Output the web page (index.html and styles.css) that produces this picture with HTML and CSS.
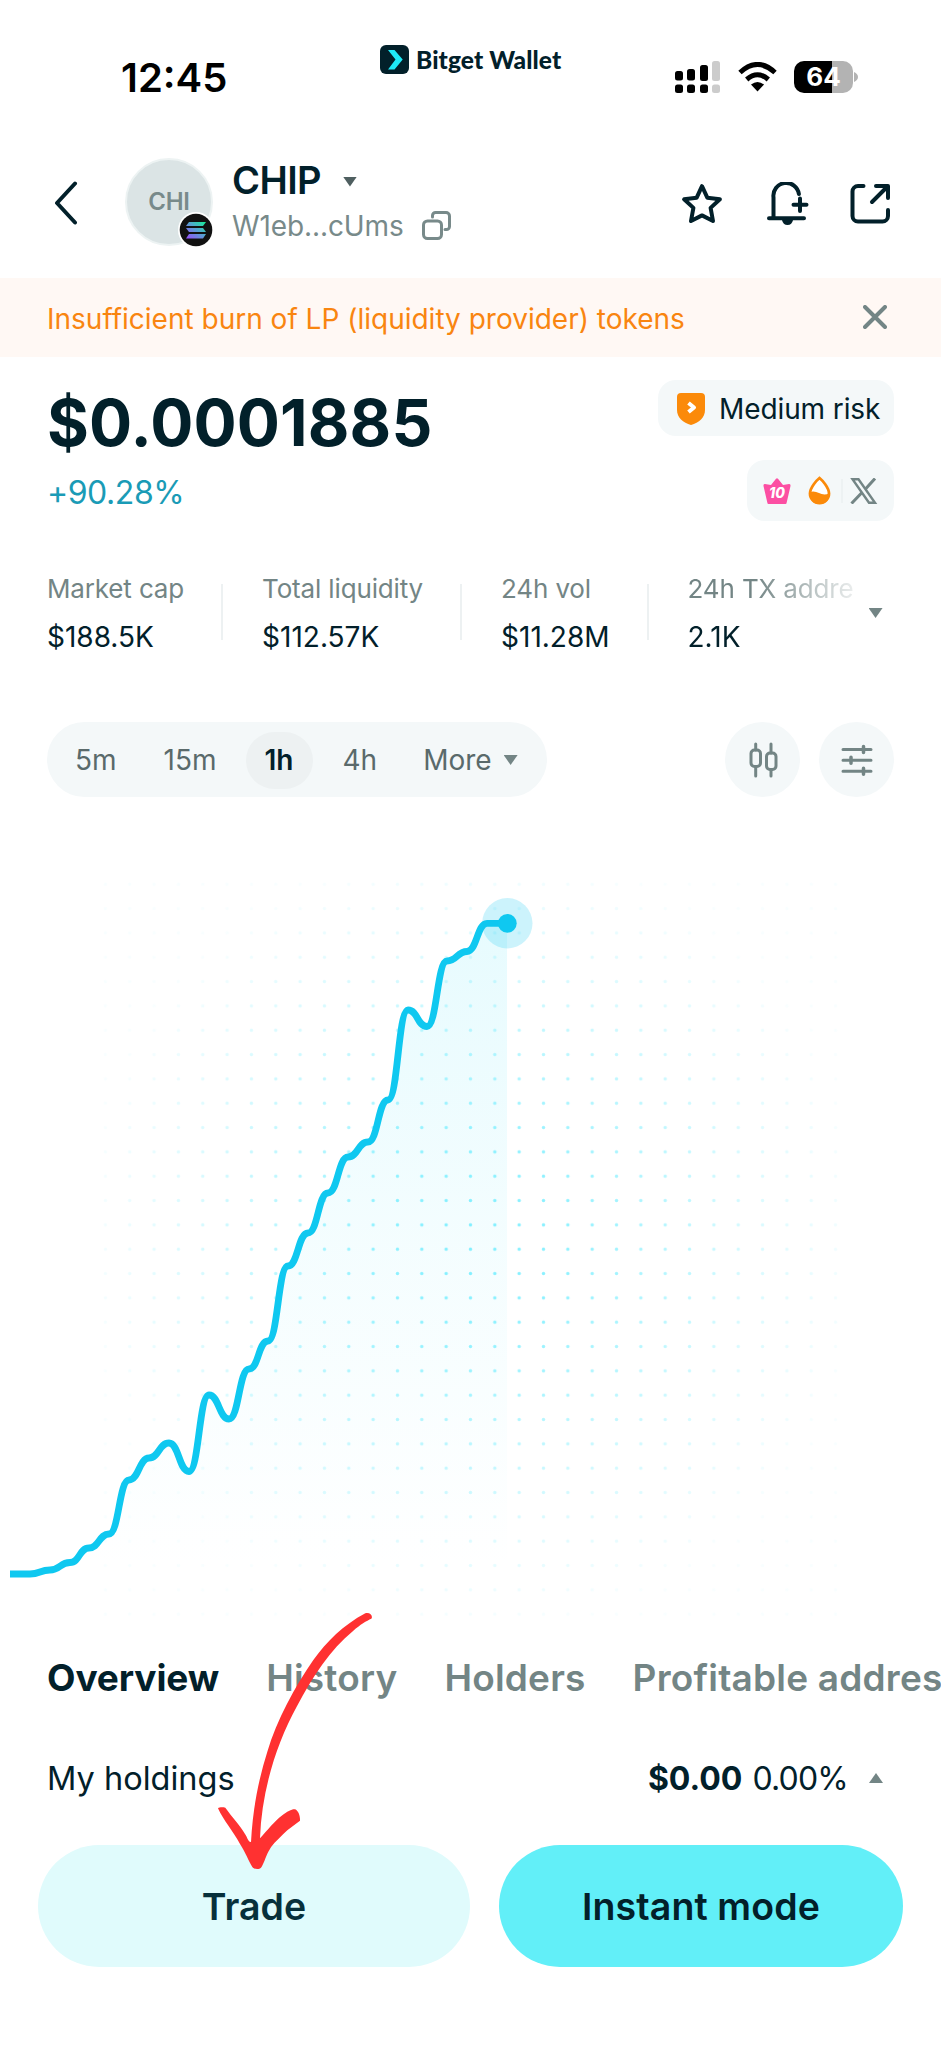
FILE: index.html
```html
<!DOCTYPE html>
<html lang="en">
<head>
	<meta charset="UTF-8">
	<title>CHIP - Bitget Wallet</title>
	<link rel="stylesheet" href="styles.css">
</head>
<body>
	<div class="phone">
		<div class="status">
			<span class="time">12:45</span>
			<div class="brand">
				<svg width="29" height="29" viewBox="0 0 29 29"><rect width="29" height="29" rx="6" fill="#02202a"/><path d="M8 5h6.500l8.200 9.500L14.500 24.500H8l7.500-10z" fill="#1ee9f7"/></svg>
				<span>Bitget Wallet</span>
			</div>
			<div class="signals">
				<svg width="45" height="32" viewBox="0 0 45 32">
					<rect x="0" y="10" width="8" height="9.500" rx="2.500"/><rect x="12" y="8" width="8" height="11.500" rx="2.500"/><rect x="25" y="4" width="8" height="16" rx="2.500"/>
					<rect x="0" y="23.500" width="8" height="8.500" rx="2.500"/><rect x="12" y="23.500" width="8" height="8.500" rx="2.500"/><rect x="25" y="23.500" width="8" height="8.500" rx="2.500"/>
					<g fill="#ccc"><rect x="37" y="0" width="8" height="20" rx="2.500"/><rect x="37" y="23.500" width="8" height="8.500" rx="2.500"/></g>
				</svg>
				<svg class="wifi" width="39" height="30" viewBox="0 0 39 30">
					<g fill="none" stroke="#000" stroke-width="5"><path d="M2 10.500Q19.500-5.500 37 10.500"/><path d="M8.700 17.500Q19.500 8 30.300 17.500"/></g>
					<path d="M13 22.500q6.500-5 13 0L19.500 29.500z"/>
				</svg>
				<div class="battery">64</div>
				<svg width="4" height="10" viewBox="0 0 4 10"><path d="M0 0q4 2 4 5t-4 5z" fill="#b3b3b3"/></svg>
			</div>
		</div>

		<div class="header">
			<svg class="back" width="24" height="44" viewBox="0 0 24 44"><path d="M21 2.500L3 22l18 19.500" fill="none" stroke="#02202a" stroke-width="4" stroke-linecap="round" stroke-linejoin="round"/></svg>
			<div class="avatar">CHI
				<svg class="chain" width="36" height="36" viewBox="0 0 36 36">
					<defs><linearGradient id="sol" x1="0" y1="1" x2="1" y2="0"><stop offset="0" stop-color="#9a4bff"/><stop offset=".5" stop-color="#5b9bd5"/><stop offset="1" stop-color="#14f195"/></linearGradient></defs>
					<circle cx="18" cy="18" r="18" fill="#fff"/><circle cx="18" cy="18" r="16.300" fill="#111"/>
					<path d="M11 10h17l-3 4H8zM8 16h17l3 4H11zM11 22h17l-3 4.500H8z" fill="url(#sol)"/>
				</svg>
			</div>
			<div class="token">
				<div class="name">CHIP <i class="caret dark"></i></div>
				<div class="address">W1eb...cUms
					<svg width="29" height="29" viewBox="0 0 29 29" fill="none" stroke="#788a8a" stroke-width="3"><rect x="1.500" y="10" width="18" height="17.500" rx="4"/><path d="M10.500 6V4.500a3 3 0 0 1 3-3h10.500a3.500 3.500 0 0 1 3.500 3.500v10.500a3 3 0 0 1-3 3h-1.500" stroke-linecap="round"/></svg>
				</div>
			</div>
			<div class="actions">
				<svg class="star" width="42" height="42" viewBox="0 0 42 42"><path d="M21 3.200L26.300 14.700L38.900 16.300L29.600 24.900L32 38L21 32.400L10 38L12.400 24.900L3.100 16.300L15.700 14.700Z"/></svg>
				<svg class="bell" width="43" height="44" viewBox="0 0 43 44"><path d="M7.500 36V15.500a12.800 12.800 0 0 1 25.400-3.500M3 36.300h35M34 16.500v12.500M27.500 22.700h13"/><path d="M16 38h11q-1 5-5.500 5T16 38z" fill="#02202a" stroke="none"/></svg>
				<svg class="share" width="41" height="41" viewBox="0 0 41 41"><path d="M13.500 3H8a5.500 5.500 0 0 0-5.500 5.500v24.500a5.500 5.500 0 0 0 5.500 5.500h24.500a5.500 5.500 0 0 0 5.500-5.500v-6M26 3h12v12M37.500 3.500L22 19"/></svg>
			</div>
		</div>

		<div class="warning">
			<span>Insufficient burn of LP (liquidity provider) tokens</span>
			<svg width="24" height="24" viewBox="0 0 24 24"><path d="M2 2l20 20M22 2L2 22" stroke="#738585" stroke-width="4" stroke-linecap="round"/></svg>
		</div>

		<div class="summary">
			<div>
				<div class="price">$0.0001885</div>
				<div class="change">+90.28%</div>
			</div>
			<div class="badges">
				<div class="risk">
					<svg width="28" height="32" viewBox="0 0 28 32"><path d="M4 0h20a4 4 0 0 1 4 4v13c0 8-6 12.500-14 15C6 29.500 0 25 0 17V4a4 4 0 0 1 4-4z" fill="#fb8a0a"/><path d="M11.500 10l5.500 4.500-5.500 4.500" fill="none" stroke="#fff" stroke-width="4" stroke-linejoin="round"/></svg>
					<span>Medium risk</span>
				</div>
				<div class="links">
					<svg width="28" height="26" viewBox="0 0 28 26"><path d="M5.500 26q-1 0-1.200-1.500L.5 8q-.3-2 1.500-2l6 1L13 .8q1-1 2 0L20 7l6-1q1.800 0 1.500 2l-3.800 16.500q-.2 1.500-1.200 1.500z" fill="#fc4fa3"/><text x="14" y="20" text-anchor="middle" class="ten">10</text></svg>
					<svg class="drop" width="23" height="29" viewBox="0 0 23 29"><path d="M11.500 2C14 4 21 11.500 21 17.500a9.500 9.500 0 0 1-19 0C2 11.500 9 4 11.500 2z" fill="#fff" stroke="#fb8a0a" stroke-width="2.800"/><path d="M1.500 16q5-1.500 9.500 1t10.500.5q0 10.500-10 10.500T1.500 16z" fill="#fb8a0a"/></svg>
					<span class="bar"></span>
					<svg width="28" height="26" viewBox="0 0 28 26" fill="none" stroke="#738585"><path d="M2.500 1.200h6L25 24.800h-6z" stroke-width="2.400"/><path d="M25 .5L15.500 11M12 14.500L1.500 25.500" stroke-width="3"/></svg>
				</div>
			</div>
		</div>

		<div class="stats">
			<div class="stat"><label>Market cap</label><b>$188.5K</b></div>
			<div class="stat"><label>Total liquidity</label><b>$112.57K</b></div>
			<div class="stat"><label>24h vol</label><b>$11.28M</b></div>
			<div class="stat last"><label>24h TX addre</label><b>2.1K</b></div>
			<i class="caret"></i>
		</div>

		<div class="toolbar">
			<div class="frames">
				<span>5m</span><span>15m</span><span class="on">1h</span><span>4h</span><span class="more">More <i class="caret"></i></span>
			</div>
			<div class="round">
				<svg width="30" height="36" viewBox="0 0 30 36"><path d="M7.700 2v6M7.700 26v8M23 2v9M23 29v5"/><rect x="3" y="8" width="9.500" height="16.500" rx="3.500"/><rect x="18.500" y="11" width="9.500" height="16.500" rx="3.500"/></svg>
			</div>
			<div class="round">
				<svg width="32" height="34" viewBox="0 0 32 34"><path d="M2 6.500h28M2 17.300h28M2 28.300h28" stroke-width="3"/><path d="M22.500 3.500v6M10 14.300v6M22.500 25.300v6" stroke-width="3.500"/></svg>
			</div>
		</div>

		<svg class="chart" width="941" height="780" viewBox="0 840 941 780">
			<defs>
				<linearGradient id="area" x1="0" y1="923" x2="0" y2="1574" gradientUnits="userSpaceOnUse">
					<stop offset="0" stop-color="#0fd8f5" stop-opacity=".1"/>
					<stop offset=".5" stop-color="#0fd8f5" stop-opacity=".045"/>
					<stop offset="1" stop-color="#0fd8f5" stop-opacity="0"/>
				</linearGradient>
				<pattern id="dots" x="93.200" y="872.100" width="24.340" height="24.330" patternUnits="userSpaceOnUse">
					<circle cx="12.200" cy="12.200" r="1.700" fill="#7defff"/>
				</pattern>
				<radialGradient id="fade" cx="475" cy="1240" r="390" gradientUnits="userSpaceOnUse">
					<stop offset="0" stop-color="#fff"/>
					<stop offset=".25" stop-color="#fff" stop-opacity=".85"/>
					<stop offset=".7" stop-color="#fff" stop-opacity=".32"/>
					<stop offset="1" stop-color="#fff" stop-opacity=".05"/>
				</radialGradient>
				<mask id="glow"><rect x="95" y="872" width="750" height="748" fill="url(#fade)"/></mask>
			</defs>
			<path d="M10 1574C20 1574 20 1574 30 1574S40 1570 50 1570S60 1562.500 70 1562.500S79 1548 89 1548S99 1534 109 1534S119 1480 129 1480S139 1458 149 1458S159 1443 169 1443S179 1471.500 189 1471.500S199 1395 209 1395S219 1419 229 1419S239 1369 249 1369S258 1341 268 1341S278 1266 288 1266S298 1233 308 1233S318 1193 328 1193S338 1157 348 1157S358 1142 368 1142S378 1100 388 1100S398 1010 408 1010S417 1026.500 427 1026.500S437 961 447 961S457 951.500 467 951.500S477 923.300 487 923.300H507V1574z" fill="url(#area)"/>
			<rect x="95" y="872" width="750" height="748" fill="url(#dots)" mask="url(#glow)"/>
			<path d="M10 1574C20 1574 20 1574 30 1574S40 1570 50 1570S60 1562.500 70 1562.500S79 1548 89 1548S99 1534 109 1534S119 1480 129 1480S139 1458 149 1458S159 1443 169 1443S179 1471.500 189 1471.500S199 1395 209 1395S219 1419 229 1419S239 1369 249 1369S258 1341 268 1341S278 1266 288 1266S298 1233 308 1233S318 1193 328 1193S338 1157 348 1157S358 1142 368 1142S378 1100 388 1100S398 1010 408 1010S417 1026.500 427 1026.500S437 961 447 961S457 951.500 467 951.500S477 923.300 487 923.300H507" fill="none" stroke="#0fc8f0" stroke-width="6.800" stroke-linejoin="round"/>
			<circle cx="507.300" cy="923.300" r="25.200" fill="#0fc8f0" fill-opacity=".21"/>
			<circle cx="507.300" cy="923.300" r="9.400" fill="#0fc8f0"/>
		</svg>

		<div class="tabs">
			<span class="on">Overview</span><span>History</span><span>Holders</span><span>Profitable address</span>
		</div>

		<div class="holdings">
			<span class="mine">My holdings</span>
			<b>$0.00</b><span class="pct">0.00%</span>
			<i class="caret up"></i>
		</div>

		<div class="buttons">
			<button class="trade">Trade</button>
			<button class="instant">Instant mode</button>
		</div>

		<svg class="arrow" width="300" height="310" viewBox="0 0 900 930"><path d="M556 70C570 66 580 78 574 86C560 92 540 104 520 122C450 180 400 255 350 350C290 460 245 600 240 745C262 720 285 692 305 677C325 662 340 655 348 659C356 664 361 680 360 692C345 704 325 716 310 732C290 752 275 765 265 785C257 800 250 825 243 833C238 839 222 838 217 831C207 815 195 785 180 762C160 725 130 690 114 655C118 651 130 652 136 653C155 680 180 705 195 732C202 742 205 757 213 756C218 660 235 570 262 485C290 390 345 290 400 210C440 155 490 105 556 70Z" fill="#ff3131"/></svg>
	</div>
</body>
</html>
```
FILE: styles.css
```css
* {
	box-sizing: border-box;
}

body {
	margin: 0;
	background-color: #fff;
	color: #02202a;
	font-family: Inter, "Liberation Sans", sans-serif;
}

svg {
	display: block;
	flex: none;
}

.phone {
	position: relative;
	width: 941px;
	height: 2048px;
	overflow: hidden;
	white-space: nowrap;
}

/* status bar */
.status {
	display: flex;
	height: 127px;
	padding-left: 121px;
}

.time {
	width: 259px;
	margin-top: 56px;
	color: #000;
	font-size: 40px;
	font-weight: 600;
	line-height: 44px;
}

.brand {
	display: flex;
	width: 295px;
	height: 29px;
	margin-top: 45px;
	gap: 7px;
	font-family: Lato, sans-serif;
	font-size: 24.5px;
	font-weight: 900;
	letter-spacing: .1px;
	line-height: 29px;
}

.signals {
	display: flex;
	align-items: center;
	height: 32px;
	margin-top: 61px;
}

.wifi {
	margin: 0 17px 0 18px;
}

.battery {
	width: 59px;
	height: 32px;
	margin-right: 1px;
	border-radius: 10px;
	background: linear-gradient(to right, #000 38px, #b3b3b3 38px);
	color: #fff;
	font-size: 26px;
	font-weight: 700;
	line-height: 32px;
	text-align: center;
}

/* header */
.header {
	display: flex;
	align-items: center;
	height: 151px;
	padding: 0 50px 0 54px;
}

.avatar {
	position: relative;
	width: 88px;
	height: 88px;
	margin: 0 0 1px 47px;
	border: 2px solid #edf3f3;
	border-radius: 50%;
	background-color: #dbe4e5;
	color: #788a8a;
	font-size: 24px;
	font-weight: 600;
	letter-spacing: -.3px;
	line-height: 83px;
	text-align: center;
}

.chain {
	position: absolute;
	right: -3px;
	bottom: -4px;
}

.token {
	margin: 2px 0 0 19px;
}

.name {
	display: flex;
	align-items: center;
	height: 45px;
	font-size: 38px;
	font-weight: 600;
	letter-spacing: -.6px;
}

.name .caret {
	margin: 4px 0 0 22px;
}

.address {
	display: flex;
	align-items: center;
	height: 48px;
	color: #788a8a;
	font-size: 28px;
	letter-spacing: -.1px;
}

.address svg {
	margin: 0 0 1px 18px;
}

.actions {
	display: flex;
	align-items: center;
	margin-left: auto;
}

.actions svg {
	fill: none;
	stroke: #02202a;
	stroke-width: 4;
	stroke-linecap: round;
	stroke-linejoin: round;
}

.star {
	margin: 3px 43px 0 0;
}

.bell {
	margin: 2px 41px 0 0;
}

.share {
	margin-top: 2px;
}

.caret {
	width: 14px;
	height: 10px;
	background-color: #738585;
	clip-path: polygon(0 0, 100% 0, 50% 100%);
}

.caret.dark {
	background-color: #4f5f60;
}

.caret.up {
	clip-path: polygon(0 100%, 100% 100%, 50% 0);
}

.warning {
	display: flex;
	align-items: center;
	justify-content: space-between;
	height: 79px;
	padding: 2px 54px 0 47px;
	background-color: #fff8f4;
	color: #f98510;
	font-size: 28px;
}

.warning svg {
	margin: 0 0 3px;
}

/* price */
.summary {
	display: flex;
	justify-content: space-between;
	height: 205px;
	padding: 23px 47px 0 47px;
}

.price {
	margin-top: 4px;
	font-size: 64px;
	font-weight: 700;
	letter-spacing: .15px;
	line-height: 78px;
}

.change {
	margin-top: 11px;
	color: #1a9bb6;
	font-size: 32px;
	letter-spacing: -.45px;
	line-height: 40px;
}

.badges {
	display: flex;
	flex-direction: column;
	align-items: flex-end;
	gap: 24px;
}

.risk, .links {
	display: flex;
	align-items: center;
	border-radius: 18px;
	background-color: #f4f8f9;
}

.risk {
	width: 236px;
	height: 56px;
	padding: 2px 0 0 19px;
	gap: 14px;
	font-size: 28px;
	letter-spacing: -.1px;
}

.links {
	width: 147px;
	height: 61px;
	padding-left: 16px;
}

.drop {
	margin: 0 10px 0 17px;
}

.bar {
	width: 2px;
	height: 24px;
	margin-right: 7px;
	background-color: #edf2f3;
}

.ten {
	fill: #fff;
	font-size: 14px;
	font-weight: 800;
	font-style: italic;
}

.stats {
	display: flex;
	height: 160px;
	padding: 10px 0 0 47px;
}

.stat {
	height: 95px;
	margin-right: 39px;
	padding-right: 39px;
	background: linear-gradient(#edf1f2, #edf1f2) right 12px / 2px 56px no-repeat;
}

.stat label {
	display: block;
	color: #738585;
	font-size: 26px;
	letter-spacing: -.15px;
	line-height: 34px;
}

.stat b {
	display: block;
	margin-top: 13px;
	font-size: 28px;
	font-weight: 400;
	line-height: 36px;
}

.stat.last {
	width: 165px;
	margin: 0;
	padding: 0;
	background: none;
	-webkit-mask-image: linear-gradient(to right, #000 40%, rgba(0, 0, 0, .15));
	mask-image: linear-gradient(to right, #000 40%, rgba(0, 0, 0, .15));
}

.stats > .caret {
	margin: 36px 0 0 16px;
}

/* timeframes */
.toolbar {
	display: flex;
	height: 118px;
	padding: 0 47px;
}

.frames {
	display: flex;
	align-items: center;
	width: 500px;
	height: 75px;
	margin-right: auto;
	padding: 1px 0 0 10px;
	border-radius: 38px;
	background-color: #f4f8f9;
	color: #5a6a6b;
	font-size: 28px;
}

.frames span {
	height: 57px;
	margin-right: 11px;
	padding: 0 18px;
	border-radius: 29px;
	line-height: 57px;
}

.frames .on {
	padding: 0 20px 0 19px;
	background-color: #edf1f2;
	color: #02202a;
	font-weight: 600;
}

.frames .more {
	display: flex;
	align-items: center;
	margin-left: -1px;
}

.more .caret {
	margin-left: 12px;
}

.round {
	display: flex;
	align-items: center;
	justify-content: center;
	width: 75px;
	height: 75px;
	margin-left: 19px;
	border-radius: 50%;
	background-color: #f4f8f9;
}

.round svg {
	fill: none;
	stroke: #738585;
	stroke-width: 3;
	stroke-linecap: round;
}

.tabs {
	display: flex;
	height: 116px;
	padding: 36px 0 0 47px;
	gap: 47px;
	color: #738585;
	font-size: 37px;
	font-weight: 600;
	letter-spacing: .2px;
	line-height: 44px;
}

.tabs .on {
	color: #02202a;
	font-weight: 700;
	letter-spacing: -.1px;
}

.holdings {
	display: flex;
	align-items: center;
	height: 84px;
	padding: 0 58px 0 47px;
	font-size: 32px;
}

.mine {
	margin-right: auto;
	font-size: 32.5px;
}

.holdings b {
	margin-right: 10px;
	font-weight: 700;
}

.pct {
	letter-spacing: -.8px;
}

.holdings .caret {
	margin-left: 21px;
}

.buttons {
	display: flex;
	margin-top: 25px;
	padding-left: 38px;
	gap: 29px;
}

button {
	height: 122px;
	padding: 0;
	border: none;
	border-radius: 61px;
	color: #02202a;
	font-family: inherit;
	font-size: 37.5px;
	font-weight: 600;
}

.trade {
	width: 432px;
	background-color: #e0fbfc;
	color: #07303b;
}

.instant {
	width: 404px;
	background-color: #62eff8;
	letter-spacing: .1px;
}

/* hand drawn pointer over the trade button */
.arrow {
	position: absolute;
	top: 1590px;
	left: 180px;
}
```
